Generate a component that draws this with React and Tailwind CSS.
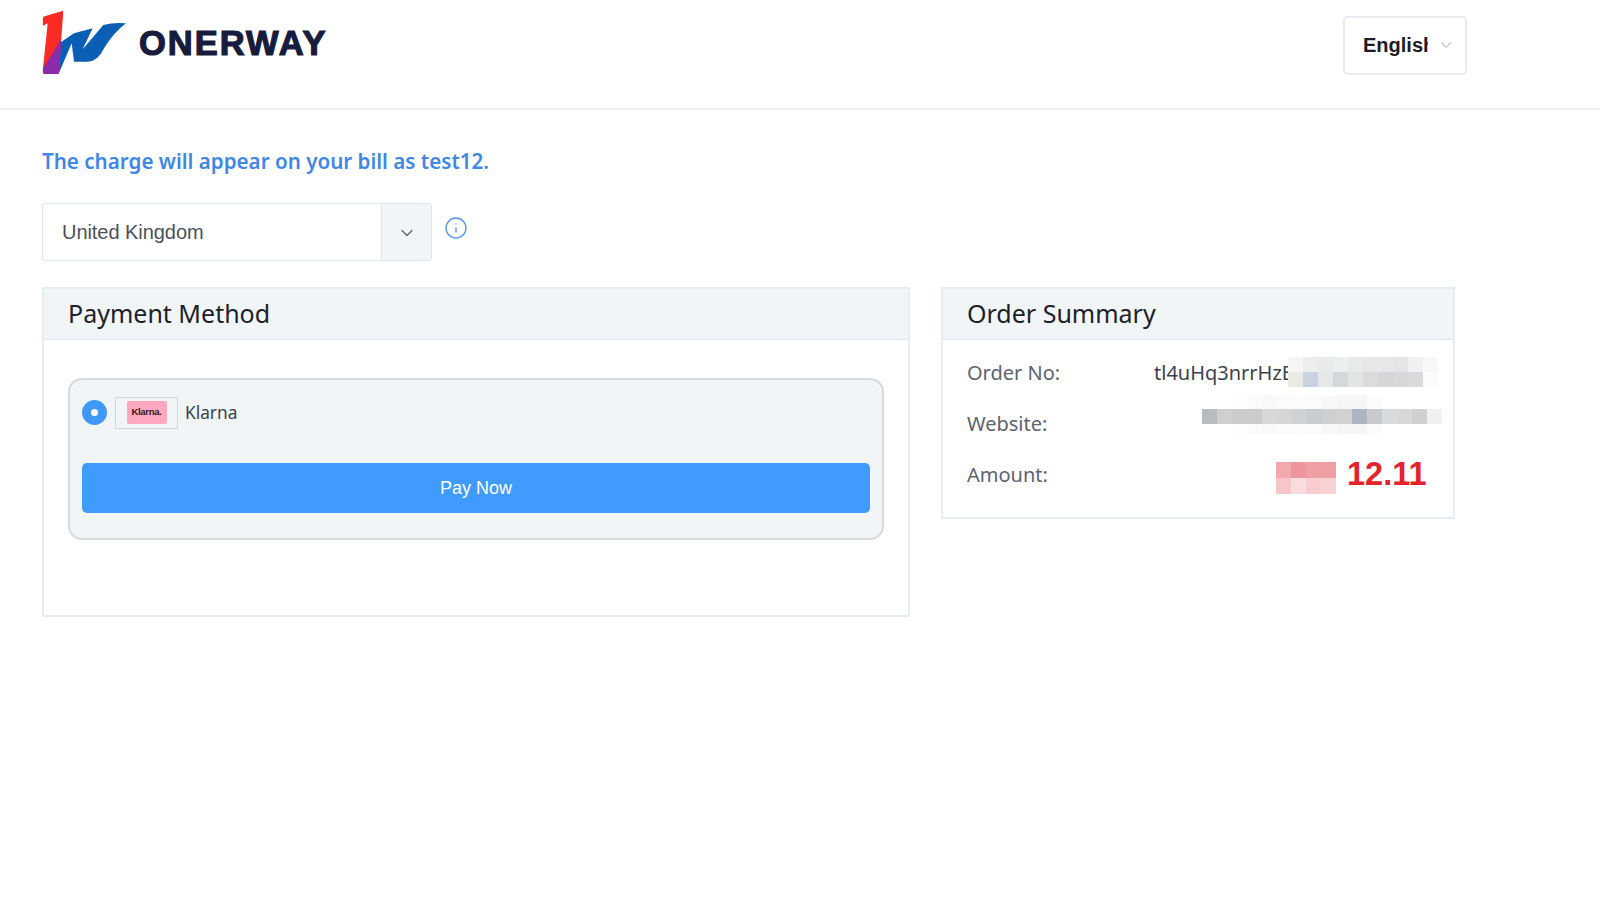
import { ChevronDown, Info } from 'lucide-react'

const ORDER_BLUR = [
  ['#f6f6f4', '#eceeee', '#e9eaea', '#ecefef', '#e8eaea', '#e6e8e8', '#e6e7e7', '#e4e6e6', '#eff0f0', '#f8f8f8'],
  ['#ebebe6', '#c9d2df', '#e6e8e8', '#d5d8da', '#e3e5e5', '#d9dbdc', '#d4d6d8', '#d6d8d9', '#d8dadb', '#fbfbfb'],
]
const SITE_BLUR = [
  ['#b9bcbe', '#cdcfd0', '#c9cbcc', '#c9cbcc', '#d7d9d9', '#d5d7d7', '#cfd1d2', '#c9cccf', '#cdcfd0', '#d2d3d1', '#adb5c2', '#c8cbce', '#d8dadb', '#d6d8d9', '#cfd1d1', '#eff0f0'],
]
const SITE_FADE = [
  ['#ffffff', '#ffffff', '#fefefe', '#fbfbfb', '#f9f9f9', '#fbfbfb', '#fcfcfc', '#fbfbfb', '#f8f8f8', '#f6f6f6', '#f5f6f6', '#fcfcfc', '#ffffff', '#ffffff', '#ffffff', '#ffffff'],
]
const AMOUNT_BLUR = [
  ['#f0a9ae', '#ec959b', '#ee9fa4', '#ef9ea4'],
  ['#f6c6c9', '#f9dcde', '#f7cdd0', '#f8d3d5'],
]

function Mosaic({ rows, cell, height }) {
  return (
    <svg width={rows[0].length * cell} height={rows.length * height} className="block" shapeRendering="crispEdges">
      {rows.map((row, y) =>
        row.map((color, x) => (
          <rect key={`${x}-${y}`} x={x * cell} y={y * height} width={cell} height={height} fill={color} />
        ))
      )}
    </svg>
  )
}

function Logo() {
  return (
    <svg width="86" height="66" viewBox="18 12 258 198" className="block">
      <defs>
        <clipPath id="one">
          <path d="M82 14 L26 31 Q20 33 20 40 L20 60 L35 52 L20 195 Q20 204 28 204 L68 204 Z" />
        </clipPath>
      </defs>
      <path
        d="M72 110 L114 82 L170 67 L140 130 L202 57 Q235 48 270 52 Q235 78 205 125 Q185 167 155 167 L114 167 L107 112 L68 203 Z"
        fill="#0a5fb4"
      />
      <g clipPath="url(#one)">
        <rect x="18" y="12" width="70" height="198" fill="#fa2b22" />
        <path d="M18 192 L76 100 L88 100 L88 210 L18 210 Z" fill="#8d2aa9" />
      </g>
    </svg>
  )
}

function KlarnaLogo() {
  return (
    <div className="flex h-[32px] w-[63px] items-center justify-center border border-[#d3d6d8] bg-[#f2f5f8]">
      <div className="flex h-[23px] w-[40px] items-center justify-center rounded-[2px] bg-[#ffa8c0]">
        <span className="text-[9.5px] font-bold tracking-[-0.3px] text-[#2c1a22] font-['Liberation_Sans',sans-serif]">Klarna.</span>
      </div>
    </div>
  )
}

function PanelHeader({ children }) {
  return (
    <div className="flex h-[51px] items-center border-b border-[#dfe8ef] bg-[#f2f5f8] pl-[24px] text-[25px] text-[#1d2129] font-['Noto_Sans',sans-serif]">
      {children}
    </div>
  )
}

function SummaryRow({ label, children }) {
  return (
    <div className="relative flex h-[51px] items-center text-[20px] font-['Noto_Sans',sans-serif]">
      <span className="text-[#5c6470]">{label}</span>
      {children}
    </div>
  )
}

export default function App() {
  return (
    <div className="min-h-[900px] bg-white font-['Liberation_Sans',sans-serif]">
      <header className="flex h-[110px] border-b-2 border-[#eff0f1] pl-[42px] pr-[133px]">
        <div className="flex items-start pt-[10px]">
          <Logo />
          <span className="ml-[11px] mt-[8px] text-[34.5px] font-bold tracking-[2px] text-[#171c3d] [-webkit-text-stroke:1.2px_#171c3d]">
            ONERWAY
          </span>
        </div>
        <div className="ml-auto mt-[16px] flex h-[59px] w-[124px] items-center rounded-[5px] border-2 border-[#e8eaef] pb-[1px] pl-[18px]">
          <span className="w-[65px] overflow-hidden text-[20px] font-bold whitespace-nowrap text-[#1a1d24]">English</span>
          <ChevronDown className="ml-[9px] h-[18px] w-[18px] text-[#c0c4cc]" strokeWidth={1.5} />
        </div>
      </header>

      <main className="pl-[42px]">
        <p className="mt-[36px] text-[20.6px] leading-[30px] font-semibold text-[#4287e3] font-['Noto_Sans',sans-serif]">
          The charge will appear on your bill as test12.
        </p>

        <div className="mt-[27px] flex items-start">
          <div className="flex h-[58px] w-[390px] overflow-hidden rounded-[3px] border border-[#dde6ee]">
            <div className="flex flex-1 items-center pl-[19px] text-[20px] tracking-[-0.05px] text-[#4a515c]">United Kingdom</div>
            <div className="flex w-[50px] items-center justify-center border-l border-[#dde6ee] bg-[#f2f5f8]">
              <ChevronDown className="mt-[2px] h-[20px] w-[20px] text-[#5a6470]" strokeWidth={1.5} />
            </div>
          </div>
          <Info className="ml-[12px] mt-[13px] h-[24px] w-[24px] text-[#5b96e4]" strokeWidth={1.4} />
        </div>

        <div className="mt-[26px] flex items-start">
          <section className="h-[330px] w-[868px] border-2 border-[#e5edf2]">
            <PanelHeader>Payment Method</PanelHeader>
            <div className="mx-[24px] mt-[38px] h-[162px] rounded-[14px] border-2 border-[#d7d9da] bg-[#f2f5f8] px-[12px]">
              <div className="flex h-[83px] items-center pb-[18px]">
                <span className="flex h-[25px] w-[25px] items-center justify-center rounded-full bg-[#4098fb]">
                  <span className="h-[7px] w-[7px] rounded-full bg-white" />
                </span>
                <div className="ml-[8px]"><KlarnaLogo /></div>
                <span className="ml-[7px] text-[17.3px] text-[#3b4350] font-['Noto_Sans',sans-serif]">Klarna</span>
              </div>
              <button type="button" className="flex h-[50px] w-full items-center justify-center rounded-[5px] bg-[#409bff] text-[18px] text-white">
                Pay Now
              </button>
            </div>
          </section>

          <section className="ml-[31px] h-[232px] w-[514px] border-2 border-[#e5edf2]">
            <PanelHeader>Order Summary</PanelHeader>
            <div className="mt-[7px] pl-[24px]">
              <SummaryRow label="Order No:">
                <span className="absolute left-[187px] text-[#3b4350]">tl4uHq3nrrHzE</span>
                <div className="absolute top-[10px] left-[321px]">
                  <Mosaic rows={ORDER_BLUR} cell={15} height={15} />
                </div>
              </SummaryRow>
              <SummaryRow label="Website:">
                <div className="absolute top-[-3px] left-[235px] flex flex-col">
                  <Mosaic rows={SITE_FADE} cell={15} height={14} />
                  <Mosaic rows={SITE_BLUR} cell={15} height={15} />
                  <Mosaic rows={SITE_FADE} cell={15} height={10} />
                </div>
              </SummaryRow>
              <SummaryRow label="Amount:">
                <div className="absolute top-[13px] left-[309px]">
                  <Mosaic rows={AMOUNT_BLUR} cell={15} height={16} />
                </div>
                <span className="absolute left-[380px] text-[32.5px] font-bold text-[#e4232c] font-['Liberation_Sans',sans-serif]">12.11</span>
              </SummaryRow>
            </div>
          </section>
        </div>
      </main>
    </div>
  )
}
